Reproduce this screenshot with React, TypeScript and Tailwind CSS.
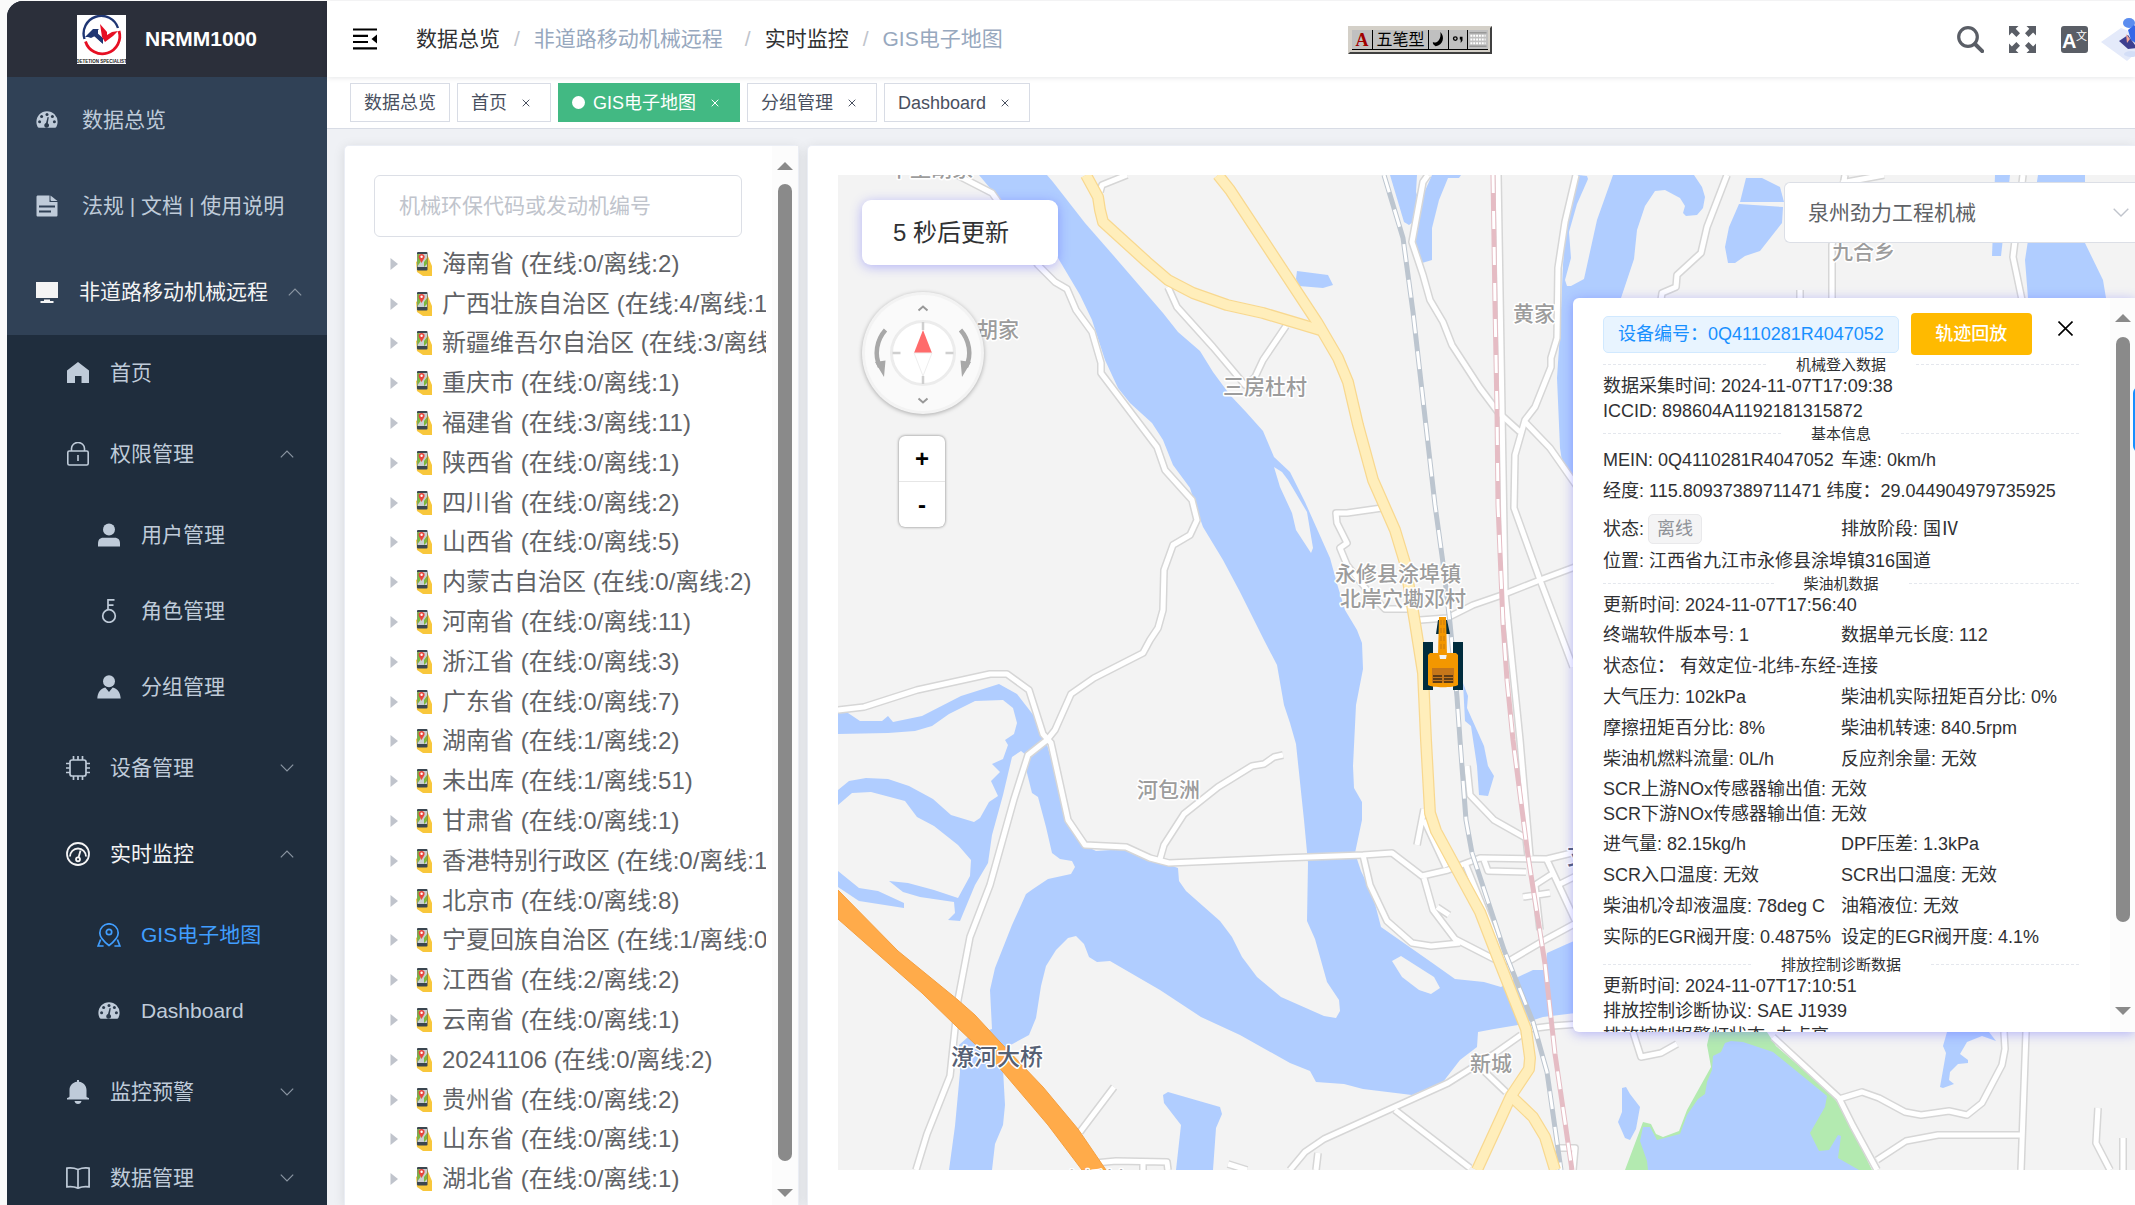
import React from 'react';

const FONT = 'font-["Liberation_Sans","Noto_Sans_CJK_SC",sans-serif]';

/* ---------- sidebar icons ---------- */

const GaugeIcon = () => (
  <svg viewBox="0 0 24 24" className="w-6 h-6 shrink-0" fill="currentColor">
    <path d="M12 3.2A10.6 10.6 0 0 0 1.4 13.8c0 2 .5 3.8 1.3 5.2.3.5.6.8 1.2.8h16.2c.6 0 .9-.3 1.2-.8.8-1.4 1.3-3.2 1.3-5.2A10.6 10.6 0 0 0 12 3.2z" />
    <g className="fill-[#2a394b]">
      <circle cx="12" cy="6.4" r="1.5" />
      <circle cx="6.6" cy="8.6" r="1.5" />
      <circle cx="17.4" cy="8.6" r="1.5" />
      <circle cx="4.6" cy="13.8" r="1.5" />
      <circle cx="19.4" cy="13.8" r="1.5" />
      <path d="M13.8 9.2l-1 6.100a2.400 2.400 0 1 1-1.800-.2l1.600-6.200z" />
    </g>
  </svg>
);

const DocIcon = () => (
  <svg viewBox="0 0 24 24" className="w-6 h-6 shrink-0" fill="currentColor">
    <path d="M3 1.5h11.5V8h8v13c0 1-.5 1.5-1.5 1.5H3c-1 0-1.500-.5-1.500-1.500V3c0-1 .5-1.5 1.5-1.5z" />
    <path d="M15.5 1.5l7 5.500h-5.500c-1 0-1.500-.5-1.500-1.500z" />
    <path d="M4 12.500h16M4 17.500h12" className="stroke-[#304156]" strokeWidth="2" />
  </svg>
);

const MonitorIcon = () => (
  <svg viewBox="0 0 24 24" className="w-6 h-6 shrink-0" fill="currentColor">
    <path d="M1 2h22v16H1zM9 19.500h6v1.500h3.500v2h-13v-2H9z" />
  </svg>
);

const HomeIcon = () => (
  <svg viewBox="0 0 24 24" className="w-6 h-6 shrink-0" fill="currentColor">
    <path d="M12 1l11 8.500V22h-7.500v-7h-6.500v7H1V9.500z" />
  </svg>
);

const LockIcon = () => (
  <svg viewBox="0 0 24 24" className="w-6 h-6 shrink-0" fill="none" stroke="currentColor" strokeWidth="1.6">
    <rect x="1.8" y="9" width="20.4" height="14" rx="1.5" />
    <path d="M5.500 9V6.500a6.500 6 0 0 1 13 0V9M12 13v6" />
  </svg>
);

const UserIcon = () => (
  <svg viewBox="0 0 24 24" className="w-6 h-6 shrink-0" fill="currentColor">
    <circle cx="12" cy="6.5" r="6" />
    <path d="M1 23.500v-2.500c0-4 1.500-6.200 5.500-6.200h11c4 0 5.500 2.200 5.500 6.200v2.500z" />
  </svg>
);

const KeyIcon = () => (
  <svg viewBox="0 0 24 24" className="w-6 h-6 shrink-0" fill="none" stroke="currentColor" strokeWidth="1.7">
    <circle cx="12" cy="17" r="6.3" />
    <path d="M11 10.700V.8h6.500M11 6.200h5.500" />
  </svg>
);

const AvatarIcon = () => (
  <svg viewBox="0 0 24 24" className="w-6 h-6 shrink-0" fill="currentColor">
    <circle cx="12" cy="6.3" r="6" />
    <path d="M.3 23.500c.3-6.500 3.500-10 8-11l3.700 4.500 3.700-4.500c4.500 1 7.700 4.500 8 11z" />
  </svg>
);

const CpuIcon = () => (
  <svg viewBox="0 0 24 24" className="w-6 h-6 shrink-0" fill="none" stroke="currentColor" strokeWidth="1.7">
    <rect x="4" y="4" width="16" height="16" rx="2" />
    <path d="M7.500 0v4M12 0v4M16.500 0v4M7.500 20v4M12 20v4M16.500 20v4M0 7.500h4M0 12h4M0 16.500h4M20 7.500h4M20 12h4M20 16.500h4" />
  </svg>
);

const OdometerIcon = () => (
  <svg viewBox="0 0 24 24" className="w-6 h-6 shrink-0" fill="none" stroke="currentColor" strokeWidth="1.8">
    <circle cx="12" cy="12" r="11" />
    <path d="M4 14.500a8 8 0 1 1 16 0" />
    <circle cx="12" cy="17.3" r="2" />
    <path d="M12.600 15.300l1.900-6.800" />
  </svg>
);

const PinIcon = () => (
  <svg viewBox="0 0 24 24" className="w-6 h-6 shrink-0" fill="none" stroke="currentColor" strokeWidth="1.7">
    <path d="M12 22.500C5.500 17.500 2.800 14 2.800 10a9.200 9.200 0 0 1 18.400 0c0 4-2.700 7.500-9.200 12.500z" />
    <circle cx="12" cy="9" r="2.7" />
    <path d="M3.600 16.500l-2.500 6.500h5.500M20.400 16.500l2.500 6.500h-5.500" />
  </svg>
);

const BellIcon = () => (
  <svg viewBox="0 0 24 24" className="w-6 h-6 shrink-0" fill="currentColor">
    <path d="M11 0h2v1.700c4.500.5 7.500 4 7.500 8.300v6.500c.2.500.8 1 2.500 1.500v1.500H1V18c1.700-.5 2.300-1 2.500-1.500V10c0-4.300 3-7.800 7.500-8.300zM8.500 21h7c-.4 1.800-1.600 3-3.500 3s-3.100-1.200-3.500-3z" />
  </svg>
);

const BookIcon = () => (
  <svg viewBox="0 0 24 24" className="w-6 h-6 shrink-0" fill="none" stroke="currentColor" strokeWidth="1.7">
    <path d="M.9 2.200c4-.6 7.500-.2 11.100 1.300 3.600-1.500 7.100-1.900 11.100-1.300v18.600c-4-.6-7.500-.2-11.100 1.300-3.600-1.500-7.100-1.900-11.100-1.300zM12 3.500v18.600" />
  </svg>
);

const Chevron = ({ up }) => (
  <svg viewBox="0 0 14 8" className="w-3.5 h-2 text-[#8a95a2]" fill="none" stroke="currentColor" strokeWidth="1.2">
    <path d={up ? 'M.8 7.300L7 1l6.200 6.300' : 'M.8.7L7 7 13.200.7'} />
  </svg>
);

/* ---------- sidebar ---------- */

const MENU = [
  { level: 1, label: '数据总览', icon: GaugeIcon },
  { level: 1, label: '法规 | 文档 | 使用说明', icon: DocIcon },
  { level: 1, label: '非道路移动机械远程', icon: MonitorIcon, arrow: 'up', tone: 'white' },
  { level: 2, label: '首页', icon: HomeIcon },
  { level: 2, label: '权限管理', icon: LockIcon, arrow: 'up' },
  { level: 3, label: '用户管理', icon: UserIcon },
  { level: 3, label: '角色管理', icon: KeyIcon },
  { level: 3, label: '分组管理', icon: AvatarIcon },
  { level: 2, label: '设备管理', icon: CpuIcon, arrow: 'down' },
  { level: 2, label: '实时监控', icon: OdometerIcon, arrow: 'up', tone: 'white' },
  { level: 3, label: 'GIS电子地图', icon: PinIcon, tone: 'blue' },
  { level: 3, label: 'Dashboard', icon: GaugeIcon },
  { level: 2, label: '监控预警', icon: BellIcon, arrow: 'down' },
  { level: 2, label: '数据管理', icon: BookIcon, arrow: 'down' },
];

const INDENT = { 1: 'pl-7 bg-[#304156]', 2: 'pl-[59px]', 3: 'pl-[90px]' };
const TONE = { white: 'text-[#f4f4f5]', blue: 'text-[#409eff]', base: 'text-[#bfcbd9]' };

const MenuItem = ({ level, label, icon: Icon, arrow, tone = 'base' }) => (
  <li>
    <a
      href="#"
      className={`flex items-center gap-5 text-[21px] leading-7 whitespace-nowrap ${INDENT[level]} ${TONE[tone]} ${
        arrow || level === 1 ? 'h-[86px]' : 'h-[76px]'
      }`}
    >
      <Icon />
      <span className={level === 1 && !arrow ? 'pl-[3px]' : ''}>{label}</span>
      {arrow && (
        <span className="ml-auto -mx-3 pr-[45px]">
          <Chevron up={arrow === 'up'} />
        </span>
      )}
    </a>
  </li>
);

const Logo = () => (
  <svg viewBox="0 0 49 49" className="w-[49px] h-[49px] bg-white shrink-0" fill="none">
    <path d="M7.500 24A17.500 17.500 0 0 1 41 13" stroke="#1f3673" strokeWidth="2.4" />
    <path d="M8.500 26.500A17.300 17.300 0 0 0 42 16" stroke="#e60f23" strokeWidth="2.8" />
    <path d="M8 22l8-8h6l-3 3 7 6v6l-8-8-4 2-3-1z" fill="#1f3673" />
    <path d="M23 9l7 8v3l5-3 6-1-5 5-8 6-3-5z" fill="#e60f23" />
    <path d="M17 14h4v8l5 7-9-8z" fill="#1f3673" />
    <text x="24.5" y="47.5" textAnchor="middle" fontSize="4.5" fontWeight="700" fill="#222">DETETION SPECIALIST</text>
  </svg>
);

const Sidebar = () => (
  <nav className="w-80 shrink-0 h-full overflow-hidden rounded-tl-2xl bg-[#1f2d3d]">
    <div className="h-[76px] bg-[#2b2f3a] flex items-center justify-center gap-[19px]">
      <Logo />
      <h1 className="text-[21px] leading-7 font-bold text-white">NRMM1000</h1>
    </div>
    <ul>
      {MENU.map((item) => (
        <MenuItem key={item.label} {...item} />
      ))}
    </ul>
  </nav>
);

/* ---------- top bars ---------- */

const ImeBar = () => (
  <div className="absolute left-[1021px] top-[25px] flex h-7 w-36 items-stretch border-2 border-[#d4d0c8] border-r-[#404040] border-b-[#404040] bg-[#d4d0c8] p-0.5 text-black">
    <div className="flex flex-1 items-stretch bg-[#c0c0c0] border-b border-black">
      <span className="w-5 text-center font-['Liberation_Serif',serif] text-lg leading-5 font-bold text-[#a00000]">A</span>
      <span className="flex-1 border-x border-black text-center text-base leading-5">五笔型</span>
      <svg viewBox="0 0 20 20" className="w-[19px]">
        <path d="M12 2c5 5 3 14-5 15-2-1-3-2-3-4 5 1 9-3 8-11z" fill="#000" />
      </svg>
      <svg viewBox="0 0 20 20" className="w-5 border-x border-black">
        <circle cx="7" cy="9" r="2" fill="none" stroke="#000" strokeWidth="1.5" />
        <path d="M12 7h3v4l-2 3v-4h-1z" fill="#000" />
      </svg>
      <svg viewBox="0 0 20 20" className="w-5">
        <path d="M2 6h16M2 10h16M2 14h16" stroke="#fff" strokeWidth="2" strokeDasharray="2 1" />
        <path d="M1 3h18M1 17h18" stroke="#808080" />
      </svg>
    </div>
  </div>
);

const Header = () => (
  <header className="relative z-10 flex h-[76px] items-center bg-white pl-[26px] shadow-[0_1px_5px_rgba(0,21,41,0.1)]">
    <button type="button" aria-label="折叠菜单">
      <svg viewBox="0 0 24 22" className="w-6 h-[22px]" stroke="#000" strokeWidth="2.2">
        <path d="M0 1.500h24M0 7.800h15M0 14h15M0 20.300h24" />
        <path d="M24 6.500v9l-5.500-4.500z" fill="#000" stroke="none" />
      </svg>
    </button>
    <ol className="ml-[39px] flex items-center gap-3.5 text-[21px] leading-7 whitespace-nowrap text-[#97a8be]">
      <li><a href="#" className="text-[#303133]">数据总览</a></li>
      <li className="text-[#c0c4cc]">/</li>
      <li className="pr-2">非道路移动机械远程</li>
      <li className="text-[#c0c4cc]">/</li>
      <li><a href="#" className="text-[#303133]">实时监控</a></li>
      <li className="text-[#c0c4cc]">/</li>
      <li>GIS电子地图</li>
    </ol>
    <ImeBar />
    <div className="ml-auto flex items-center gap-[25px] text-[#5a5e66]">
      <button type="button" aria-label="搜索">
        <svg viewBox="0 0 27 27" className="w-[27px] h-[27px]" fill="none" stroke="currentColor">
          <circle cx="11" cy="11" r="9.3" strokeWidth="3.2" />
          <path d="M18 18l7.200 7.200" strokeWidth="4" strokeLinecap="round" />
        </svg>
      </button>
      <button type="button" aria-label="全屏">
        <svg viewBox="0 0 27 27" className="w-[27px] h-[27px]" fill="currentColor">
          <path d="M0 0h9.500L6.700 2.800l4.300 4.500-3.600 3.600-4.500-4.300L0 9.500z" />
          <path d="M27 0v9.500l-2.900-2.900-4.500 4.300-3.600-3.600 4.300-4.500L17.500 0zM0 27v-9.500l2.900 2.900 4.500-4.300 3.600 3.600-4.300 4.500L9.500 27zM27 27h-9.500l2.800-2.800-4.300-4.500 3.600-3.600 4.500 4.300 2.900-2.900z" />
        </svg>
      </button>
      <button type="button" aria-label="语言">
        <svg viewBox="0 0 27 27" className="w-[27px] h-[27px]">
          <rect width="27" height="27" rx="3" fill="currentColor" />
          <text x="1" y="22" fontSize="20" fontWeight="700" fill="#fff">A</text>
          <text x="15" y="14" fontSize="11" fill="#fff">文</text>
        </svg>
      </button>
      <a href="#" aria-label="个人中心" className="-ml-3 block w-[34px] overflow-hidden">
        <svg viewBox="0 0 36 44" className="w-9 h-11">
          <path d="M0 25L20 11l30 12-24 21z" fill="#e4eafa" />
          <ellipse cx="28" cy="6" rx="6" ry="5" fill="#5b8def" />
          <path d="M18 24l9-6 9 13-9 1z" fill="#3d3f8f" />
          <path d="M27 13l6-5 3 3v16l-6-4z" fill="#3568e8" />
          <path d="M25 17l4 5-3 4z" fill="#f3a596" />
          <ellipse cx="30" cy="37" rx="7" ry="3" fill="#d3def7" />
        </svg>
      </a>
    </div>
  </header>
);

const TABS = [
  { label: '数据总览' },
  { label: '首页', closable: true },
  { label: 'GIS电子地图', closable: true, active: true },
  { label: '分组管理', closable: true },
  { label: 'Dashboard', closable: true },
];

const Tabs = () => (
  <div className="flex h-[52px] items-center gap-[7px] border-b border-[#d8dce5] bg-white pl-[23px]">
    {TABS.map(({ label, closable, active }) => (
      <div
        key={label}
        className={`flex h-[39px] items-center gap-2 border px-[13px] text-lg leading-6 whitespace-nowrap ${
          active ? 'border-[#42b983] bg-[#42b983] text-white' : 'border-[#d8dce5] bg-white text-[#495060]'
        }`}
      >
        {active && <span className="size-[13px] rounded-full bg-white" />}
        <a href="#">{label}</a>
        {closable && (
          <button type="button" aria-label={`关闭 ${label}`} className="flex w-[22px] justify-center">
            <svg viewBox="0 0 8 8" className="size-2" stroke="currentColor" strokeWidth="1">
              <path d="M.7.7l6.600 6.600M7.300.7L.7 7.300" />
            </svg>
          </button>
        )}
      </div>
    ))}
  </div>
);

/* ---------- region tree ---------- */

const REGIONS = [
  ['海南省', 0, 2],
  ['广西壮族自治区', 4, 11],
  ['新疆维吾尔自治区', 3, 10],
  ['重庆市', 0, 1],
  ['福建省', 3, 11],
  ['陕西省', 0, 1],
  ['四川省', 0, 2],
  ['山西省', 0, 5],
  ['内蒙古自治区', 0, 2],
  ['河南省', 0, 11],
  ['浙江省', 0, 3],
  ['广东省', 0, 7],
  ['湖南省', 1, 2],
  ['未出库', 1, 51],
  ['甘肃省', 0, 1],
  ['香港特别行政区', 0, 1],
  ['北京市', 0, 8],
  ['宁夏回族自治区', 1, 0],
  ['江西省', 2, 2],
  ['云南省', 0, 1],
  ['20241106', 0, 2],
  ['贵州省', 0, 2],
  ['山东省', 0, 1],
  ['湖北省', 0, 1],
];

const PhoneMapIcon = () => (
  <svg viewBox="0 0 18 26" className="w-[18px] h-[26px] shrink-0">
    <path d="M1 11l11-8 5 12v10H8L2 21z" fill="#f8c73c" />
    <rect x="2" y="1" width="10.5" height="18.500" rx="1" fill="#3b4650" />
    <rect x="2.5" y="3" width="9.5" height="13" fill="#c9cfd0" />
    <path d="M2.500 3h2l1 8-3 4zM9 11l3-4v6l-3 3z" fill="#7cb83c" />
    <path d="M6.500 12L3.800 7a3 3 0 1 1 5.600 0z" fill="#e8453c" />
    <circle cx="6.6" cy="5.8" r="1.2" fill="#fff" />
  </svg>
);

const ScrollArrow = ({ down }) => (
  <svg viewBox="0 0 16 8" className="w-4 h-2 shrink-0 fill-[#8a8a8a]">
    <path d={down ? 'M0 0h16l-8 8z' : 'M8 0l8 8H0z'} />
  </svg>
);

const RegionPanel = () => (
  <section className="flex w-[455px] shrink-0 rounded-t-[5px] border border-b-0 border-[#ebeef5] bg-white shadow-[0_2px_12px_rgba(0,0,0,0.1)]">
    <div className="flex min-w-0 flex-1 flex-col pt-[29px] pb-1.5">
      <input
        type="text"
        aria-label="机械环保代码或发动机编号"
        placeholder="机械环保代码或发动机编号"
        className="ml-[29px] mr-[30px] h-[62px] shrink-0 rounded-md border border-[#dcdfe6] px-6 text-[21px] placeholder:text-[#c0c4cc] outline-none"
      />
      <ul className="mt-[7px] mr-1.5 flex flex-1 flex-col overflow-hidden">
        {REGIONS.map(([name, online, offline]) => (
          <li key={name} className="flex flex-1 items-center pl-[45px] text-2xl leading-8 whitespace-nowrap text-[#606266]">
            <svg viewBox="0 0 8 12" className="w-2 h-3 shrink-0 fill-[#c0c4cc]">
              <path d="M.5 0L8 6 .5 12z" />
            </svg>
            <span className="ml-[17px] mr-[9px]">
              <PhoneMapIcon />
            </span>
            {name} (在线:{online}/离线:{offline})
          </li>
        ))}
      </ul>
    </div>
    <div className="flex w-[26px] shrink-0 flex-col items-center bg-[#fcfcfc] pt-4 pb-2">
      <ScrollArrow />
      <div className="mt-[14px] mb-7 w-3.5 flex-1 rounded-full bg-[#8a8a8a]" />
      <ScrollArrow down />
    </div>
  </section>
);

/* ---------- map drawing ---------- */

const WATER = [
  // main river
  'M979 175L1000 200 1035 225 1058 258 1080 295 1092 320 1105 360 1118 388 1130 403 1152 423 1163 440 1173 465 1190 488 1197 510 1203 527 1223 560 1240 592 1264 640 1277 665 1284 705 1290 723 1296 744 1304 820 1308 863 1307 921 1315 939 1327 982 1339 1000 1340 1011 1336 1018 1324 1016 1281 997 1257 977 1242 957 1232 937 1220 921 1186 891 1179 881 1178 868 1150 858 1126 849 1096 851 1084 845 1068 820 1055 773 1046 741 1041 725 1017 694 999 684 961 696 922 716 893 722 888 716 882 721 860 721 848 713 838 713 838 734 888 733 915 731 932 726 949 714 975 701 1003 700 1013 708 1017 723 1014 734 1005 740 1008 745 1003 759 992 764 1000 772 991 781 998 796 989 802 980 818 974 822 951 815 933 799 909 786 888 779 866 778 849 781 838 790 838 805 852 793 871 792 905 801 917 817 934 826 958 845 971 860 970 876 958 898 934 890 908 883 889 881 903 892 920 897 954 902 955 913 948 920 960 921 975 885 988 863 992 835 1003 795 1012 757 1021 751 1026 755 1027 773 1032 793 1038 797 1046 827 1052 853 1060 859 1072 861 1075 867 1071 874 1048 879 1033 889 1026 894 1012 925 995 968 990 990 992 1029 968 1037 959 1045 960 1072 955 1126 949 1170 992 1170 995 1144 1003 1125 1005 1105 1003 1069 1007 1047 1029 1035 1036 1018 1041 986 1046 966 1056 950 1068 938 1076 936 1084 944 1089 957 1097 962 1110 961 1160 990 1201 1017 1240 1035 1290 1063 1310 1071 1316 1082 1344 1084 1363 1089 1412 1095 1443 1082 1460 1060 1477 1047 1478 1032 1494 1029 1518 1025 1543 1017 1600 1010 1600 930 1567 944 1547 953 1545 970 1533 970 1518 977 1501 987 1484 982 1455 979 1431 962 1381 927 1373 896 1361 871 1355 853 1362 820 1362 802 1354 788 1353 766 1356 705 1363 669 1362 643 1357 630 1345 610 1338 587 1330 558 1305 502 1290 472 1274 457 1263 431 1246 412 1230 395 1213 372 1200 351 1178 332 1163 313 1113 255 1085 223 1053 182 1047 175z',
  'M838 871L859 888 878 891 904 903 904 908 859 901 838 887z',
  'M1163 1095L1168 1092 1220 1107 1222 1114 1216 1128 1213 1170 1176 1170 1181 1125 1164 1103z',
  'M1297 271L1328 275 1333 285 1323 288 1299 286 1296 279z',
  'M1463 683L1468 696 1467 708 1484 746 1488 766 1494 776 1488 796 1479 795 1477 766 1471 726 1465 721z',
  'M1390 175H1417L1416 192 1417 195 1413 222 1409 225 1404 222z',
  'M1432 175H1461L1459 178H1448L1439 200 1432 228V260L1422 263 1415 245 1420 202z',
  'M1578 175L1587 176 1588 179 1577 204 1569 232 1571 258 1565 280 1567 286H1571L1584 279 1597 220 1613 175H1694L1702 187 1705 197 1703 208 1697 215 1686 216 1683 213 1685 206 1680 198 1665 190 1655 191 1645 206 1637 230 1634 259 1621 298V480H1575L1563 468 1560 448 1557 378 1560 332 1563 265 1566 220z',
  'M1746 178H1762L1780 187 1784 202H1740z',
  'M1739 204L1783 207 1782 223 1760 251 1745 256 1735 263H1728L1725 247 1729 227z',
  'M1995 175H2010L2001 256H1992z',
  'M2038 175H2085V243L2103 280 2106 298H2028L2025 260z',
];

const LAKES = [
  'M1648 1170L1647 1161 1640 1141 1643 1127H1650L1657 1140 1680 1134 1687 1115 1698 1099 1705 1094 1707 1082 1712 1070 1713 1056 1721 1052 1725 1043 1731 1041 1743 1042 1773 1052 1827 1096 1825 1107 1810 1133 1819 1151 1829 1150 1838 1135 1841 1136 1838 1158 1859 1170z',
  'M1622 1088L1626 1087 1630 1094 1640 1107 1636 1129 1630 1140 1625 1138 1618 1122 1622 1112z',
  'M1947 1032L1943 1046 1946 1053 1940 1087 1943 1088 1954 1084 1949 1080 1950 1072 1958 1064 1968 1063V1060L1960 1054 1967 1042 1982 1036 1996 1041 1989 1032z',
];

const ISLANDS = [
  'M1274 467L1282 472 1288 480 1307 512 1313 548 1311 553 1296 530 1292 513 1280 487z',
  'M1392 961L1401 956 1434 977 1440 988 1431 994 1419 990 1402 977z',
];

const ROADS = [
  'M957 175L992 193 997 200 1038 265 1055 282 1067 289 1076 310 1092 332 1101 363 1101 373 1157 447 1165 470 1192 500 1197 520 1190 535 1173 545 1164 570 1163 610 1158 628 1150 640 1143 653 1094 678 1071 694 1055 730 1047 740 1028 755 1014 799 990 885 970 937 958 1000 950 1076 927 1134 916 1170',
  'M838 710L864 707 917 690 990 674 1007 674 1029 690 1043 734 1051 743 1068 820 1085 845 1126 847 1150 858 1169 863 1281 858 1363 855 1392 853 1422 876 1448 870 1480 858 1547 859 1580 851',
  'M1160 859L1164 845 1184 814 1218 787 1252 766 1264 764 1274 757 1283 755',
  'M1100 192L1102 185 1127 175',
  'M1168 287L1177 307 1213 347 1245 385 1255 377 1263 360 1286 326',
  'M1428 175L1423 182 1412 242 1423 275 1430 300 1443 322 1452 345 1480 388 1498 412 1520 432',
  'M1498 175L1502 412 1505 593 1520 740 1530 856',
  'M1576 175L1565 222 1558 268 1557 338 1551 358 1551 367 1535 407 1525 420 1515 455 1514 508 1540 580 1573 667',
  'M1525 422L1550 448 1578 488',
  'M1727 175L1707 227 1701 253 1677 275 1676 287 1662 293 1661 300',
  'M1884 175L1841 183M1845 175L1832 245V300',
  'M2023 175L2013 257 2022 300M1800 290V300',
  'M1382 508L1347 513 1336 513 1337 523 1347 543 1340 548 1347 565 1367 590 1385 609 1408 609',
  'M1420 620L1447 618 1473 605 1502 595 1540 580 1575 567',
  'M1424 809L1417 845M1424 820L1446 867',
  'M1363 855L1370 885 1387 921 1412 943 1431 946 1460 943',
  'M1424 878L1433 910 1455 939 1494 959 1509 961 1543 941 1578 922M1437 907L1449 915',
  'M1484 860L1488 871 1526 872M1547 860L1575 920M1535 885L1552 874M1523 897L1550 893M1535 885L1540 930M1558 885L1578 875',
  'M1465 863L1484 910 1504 960',
  'M1467 766L1470 795 1494 820 1526 838 1528 856',
  'M1528 1029L1552 1026 1580 1024',
  'M1521 1035L1494 1054 1448 1083 1324 1139 1305 1152 1290 1170',
  'M1395 1110L1470 1168M1484 1071L1506 1092',
  'M1114 1087L1080 1132M1095 1163L1116 1161 1167 1162 1168 1170M1143 1162V1170M1318 1153L1316 1170M1228 1164L1247 1170',
  'M1555 1148H1575L1573 1170',
  'M1633 1032L1641 1057 1661 1053 1677 1044',
  'M1773 1037L1839 1098 1853 1126 1877 1170',
  'M1839 1099L1862 1092 1879 1098 1905 1112 1921 1115 1949 1111 1967 1115 1982 1103 2002 1065 2005 1049 2004 1032',
  'M2026 1032L2021 1170M1877 1160L1906 1141 1938 1135 2020 1135',
  'M2098 1108L2096 1143 2110 1170M2123 1138V1170',
];

const MAIN_ROADS = [
  'M1086 175L1098 197 1100 210 1103 222 1147 262 1168 280 1193 293 1227 305 1263 313 1320 330',
  'M1218 175L1230 190 1317 322 1338 358 1348 382 1358 425 1373 480 1395 530 1405 563 1415 623 1423 673 1426 740 1430 813 1436 831 1480 912 1499 961 1526 1029 1530 1058 1529 1069 1511 1096 1477 1170',
  'M1511 1096L1533 1117 1545 1137 1555 1170',
];

const RAILS = [
  ['#bcc5cf', 'M1384 175L1403 238 1413 312 1435 505 1443 563 1450 623 1457 697 1460 740 1466 820 1472 853 1504 950 1533 1022 1547 1072 1561 1170'],
  ['#e5bcc4', 'M1493 175L1495 305 1497 412 1498 505 1503 623 1507 680 1513 740 1528 856 1545 964 1555 1054 1572 1170'],
];

const PLACES = [
  [889, 176, '下垄胡家'],
  [977, 337, '胡家'],
  [1223, 394, '三房杜村'],
  [1513, 321, '黄家'],
  [1335, 581, '永修县涂埠镇'],
  [1340, 606, '北岸穴墈邓村'],
  [1137, 797, '河包洲'],
  [1470, 1071, '新城'],
  [1832, 259, '九合乡'],
  [1062, 1187, '上桥村'],
];

const MapCanvas = () => (
  <svg viewBox="838 175 1297 995" preserveAspectRatio="xMinYMin slice" className="block size-full bg-[#f3f3f3]" fill="none" strokeLinejoin="round">
    <path d="M1710 1032L1707 1045 1711 1067 1687 1110 1679 1131 1663 1137 1656 1134 1651 1124 1643 1122 1625 1170H1872L1842 1108 1828 1091 1776 1046 1767 1032z" fill="#b3eab0" />
    {[...WATER, ...LAKES].map((d) => <path key={d} d={d} fill="#b0cdff" />)}
    {ISLANDS.map((d) => <path key={d} d={d} fill="#f3f3f3" />)}
    {ROADS.map((d) => <path key={d} d={d} stroke="#d6d6d6" strokeWidth="8" />)}
    {ROADS.map((d) => <path key={d} d={d} stroke="#fff" strokeWidth="5" />)}
    {RAILS.map(([color, d]) => (
      <g key={color}>
        <path d={d} stroke={color} strokeWidth="5" />
        <path d={d} stroke="#fff" strokeWidth="3" strokeDasharray="18 18" />
      </g>
    ))}
    {MAIN_ROADS.map((d) => <path key={d} d={d} stroke="#f8d88f" strokeWidth="12" />)}
    {MAIN_ROADS.map((d) => <path key={d} d={d} stroke="#ffeebb" strokeWidth="9.5" />)}
    <path d="M838 890L898 951 958 1000 975 1015 1000 1042 1043 1087 1078 1129 1106 1170H1082L1048 1125 997 1065 956 1026 922 993 838 919z" fill="#ffab4a" stroke="#f59f3f" />
    <g fontSize="21" fontWeight="500" fill="#9c9c9c" stroke="#fff" strokeWidth="3" paintOrder="stroke">
      {PLACES.map(([x, y, name]) => <text key={name} x={x} y={y}>{name}</text>)}
      <text x="951" y="1065" fontSize="23" fill="#566074">潦河大桥</text>
      <text x="1567" y="864" fontSize="22" fill="#566074">艾城</text>
    </g>
    {/* excavator marker */}
    <g>
      <path d="M1423 642h10v48h-10zM1453 642h10v48h-10z" fill="#002c3d" />
      <path d="M1438 620h9l3 14h-4v-3h-6v3h-4z" fill="#002c3d" />
      <path d="M1439 617h7l1 38h-9z" fill="#f39700" />
      <path d="M1441 620v30M1444 620v30" stroke="#c97a10" strokeDasharray="5 3" />
      <path d="M1428 655l2-2h9l1 6h6l1-6h9l2 2v30c-4 3-26 3-30 0z" fill="#f39700" />
      <path d="M1432 668h22v15h-22z" fill="#c5761a" />
      <path d="M1433 676h9M1433 679h9M1433 682h9M1444 676h9M1444 679h9M1444 682h9" stroke="#3d2a14" strokeWidth="1.7" />
    </g>
  </svg>
);

const Compass = () => (
  <svg viewBox="0 0 130 130" className="w-[130px] h-[130px] drop-shadow-[0_1px_2px_rgba(0,0,0,0.3)]" fill="none">
    <circle cx="65" cy="65" r="61" fill="#f3f3f3" />
    <circle cx="65" cy="65" r="58" fill="#fafafa" />
    <circle cx="65" cy="65" r="31.5" fill="#fff" stroke="#ececec" strokeWidth="3" />
    <path d="M65 34v8M65 88v8M34.500 65h8M87.500 65h8" stroke="#cfcfcf" strokeWidth="2.5" />
    <path d="M65 42l9 23H56z" fill="#ff6b6b" />
    <path d="M65 88l9-23H56z" fill="#fff" stroke="#eee" />
    <path d="M27.500 42c-9 10-11.500 25-5.500 37M102.500 42c9 10 11.500 25 5.500 37" stroke="#a8a8a8" strokeWidth="4.5" />
    <path d="M17 74l10.500-1.500L26 89zM113 74l-10.500-1.500L104 89z" fill="#a8a8a8" />
    <path d="M60.500 22.500l4.500-4 4.500 4M60.500 110.500l4.500 4 4.500-4" stroke="#999" strokeWidth="2" />
  </svg>
);

/* ---------- device info ---------- */

const Divider = ({ children }) => (
  <div className="flex h-[19px] items-center text-[15px] leading-[19px] text-[#303133]">
    <span className="flex-1 border-t border-dashed border-[#e4e7ed]" />
    <h3 className="px-[30px]">{children}</h3>
    <span className="flex-1 border-t border-dashed border-[#e4e7ed]" />
  </div>
);

const Line = ({ children }) => <p className="leading-[25px]">{children}</p>;

const Pairs = ({ rows }) => (
  <ul className="py-0.5 leading-[31px]">
    {rows.map(([a, b]) => (
      <li key={a} className={b ? 'grid grid-cols-2' : ''}>
        <span>{a}</span>
        {b && <span>{b}</span>}
      </li>
    ))}
  </ul>
);

const DeviceInfo = () => (
  <aside className="absolute right-0 top-[123px] flex h-[734px] w-[562px] overflow-hidden rounded-l-md bg-white text-lg whitespace-nowrap text-[#303133] shadow-[0_2px_12px_rgba(60,60,255,0.35)]">
    <div className="flex-1 pl-[30px] pr-[31px] pt-[15px]">
      <div className="flex items-center">
        <span className="flex h-[37px] items-center rounded-[5px] border border-[#d1e9ff] bg-[#e8f4ff] px-[14px] text-[#1890ff]">
          设备编号：0Q4110281R4047052
        </span>
        <button type="button" className="ml-3 h-[42px] w-[121px] rounded bg-[#ffba00] font-medium text-white">轨迹回放</button>
        <button type="button" aria-label="关闭" className="ml-[26px] pb-3">
          <svg viewBox="0 0 15 15" className="size-[15px]" stroke="#000" strokeWidth="1.6">
            <path d="M.5.5l14 14M14.500.5l-14 14" />
          </svg>
        </button>
      </div>
      <Divider>机械登入数据</Divider>
      <Line>数据采集时间: 2024-11-07T17:09:38</Line>
      <Line>ICCID: 898604A1192181315872</Line>
      <Divider>基本信息</Divider>
      <Pairs rows={[['MEIN: 0Q4110281R4047052', '车速: 0km/h'], ['经度: 115.80937389711471 纬度：29.044904979735925']]} />
      <div className="grid h-10 grid-cols-2 items-center">
        <div className="flex items-center gap-1">
          状态:
          <span className="rounded-[5px] border border-[#e9e9eb] bg-[#f4f4f5] px-2 leading-7 text-[#909399]">离线</span>
        </div>
        <div>排放阶段: 国Ⅳ</div>
      </div>
      <Line>位置: 江西省九江市永修县涂埠镇316国道</Line>
      <Divider>柴油机数据</Divider>
      <Line>更新时间: 2024-11-07T17:56:40</Line>
      <Pairs
        rows={[
          ['终端软件版本号: 1', '数据单元长度: 112'],
          ['状态位： 有效定位-北纬-东经-连接'],
          ['大气压力: 102kPa', '柴油机实际扭矩百分比: 0%'],
          ['摩擦扭矩百分比: 8%', '柴油机转速: 840.5rpm'],
          ['柴油机燃料流量: 0L/h', '反应剂余量: 无效'],
        ]}
      />
      <Line>SCR上游NOx传感器输出值: 无效</Line>
      <Line>SCR下游NOx传感器输出值: 无效</Line>
      <Pairs
        rows={[
          ['进气量: 82.15kg/h', 'DPF压差: 1.3kPa'],
          ['SCR入口温度: 无效', 'SCR出口温度: 无效'],
          ['柴油机冷却液温度: 78deg C', '油箱液位: 无效'],
          ['实际的EGR阀开度: 0.4875%', '设定的EGR阀开度: 4.1%'],
        ]}
      />
      <Divider>排放控制诊断数据</Divider>
      <Line>更新时间: 2024-11-07T17:10:51</Line>
      <Line>排放控制诊断协议: SAE J1939</Line>
      <Line>排放控制报警灯状态: 未点亮</Line>
    </div>
    <div className="flex w-[25px] shrink-0 flex-col items-center bg-[#fcfcfc] pt-4 pb-[17px]">
      <ScrollArrow />
      <div className="mt-[15px] mb-[85px] w-3.5 flex-1 rounded-full bg-[#8a8a8a]" />
      <ScrollArrow down />
    </div>
  </aside>
);

const MapPanel = () => (
  <section className="flex min-w-0 flex-1 flex-col rounded-tl-[5px] border border-r-0 border-b-0 border-[#ebeef5] bg-white pt-[29px] pb-[35px] pl-[30px] shadow-[0_2px_12px_rgba(0,0,0,0.1)]">
    <div className="relative min-h-0 flex-1 overflow-hidden">
      <MapCanvas />
      <div className="absolute left-6 top-[25px] h-[65px] w-[196px] rounded-[9px] bg-white pl-[31px] text-2xl leading-[65px] text-[#303133] shadow-[0_2px_12px_rgba(60,60,255,0.35)]">
        5 秒后更新
      </div>
      <div className="absolute left-5 top-[113px]">
        <Compass />
      </div>
      <div className="absolute left-[61px] top-[261px] flex h-[91px] w-[46px] flex-col rounded-md bg-white text-2xl font-bold text-black shadow-[0_0_3px_rgba(0,0,0,0.5)]">
        <button type="button" aria-label="放大" className="flex-1 border-b border-[#e6e6e6]">+</button>
        <button type="button" aria-label="缩小" className="flex-1">-</button>
      </div>
      <div className="absolute right-0 top-[7px] w-[351px]">
        <select
          aria-label="公司"
          className="h-[61px] w-full appearance-none rounded-l-md border border-r-0 border-[#dcdfe6] bg-white pl-[23px] text-[21px] text-[#606266] outline-none"
        >
          <option>泉州劲力工程机械</option>
        </select>
        <svg viewBox="0 0 16 9" className="pointer-events-none absolute right-1.5 top-[26px] w-4 h-[9px]" fill="none" stroke="#c0c4cc" strokeWidth="1.4">
          <path d="M.7.7L8 8 15.300.7" />
        </svg>
      </div>
      <DeviceInfo />
      <span className="absolute -right-1 top-[212px] h-[65px] w-1.5 rounded-l-md bg-[#1890ff]" />
    </div>
  </section>
);

export default function App() {
  return (
    <div className={`flex h-screen overflow-hidden bg-[#fafafa] pt-px pl-[7px] ${FONT}`}>
      <Sidebar />
      <div className="flex min-w-0 flex-1 flex-col bg-[#eff1f5]">
        <Header />
        <Tabs />
        <main className="flex min-h-0 flex-1 gap-2 pt-4 pl-[17px]">
          <RegionPanel />
          <MapPanel />
        </main>
      </div>
    </div>
  );
}
